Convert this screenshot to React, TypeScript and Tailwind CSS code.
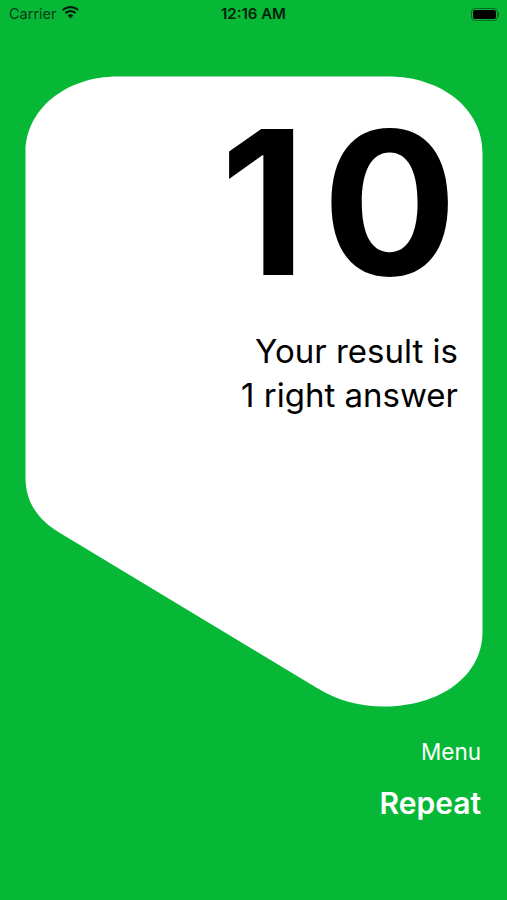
export default function App() {
  return (
    <div className="w-[507px] h-[900px] overflow-hidden bg-[#06b836] font-['Inter','Liberation_Sans',sans-serif]">
      {/* status bar */}
      <div className="relative flex items-center h-[28px] pl-[9px] pr-[8px] text-[#0a3d18]">
        <span className="text-[14.500px] leading-none text-[#063a16]">Carrier</span>
        <svg className="ml-[4px] mb-[3px]" width="19" height="14" viewBox="0 0 19 14" fill="#04200c">
          <path d="M9.5 2.2c2.7 0 5.2 1 7.1 2.8l1.4-1.5C15.7 1.3 12.7 0 9.5 0S3.3 1.3 1 3.5l1.4 1.5C4.3 3.200 6.800 2.200 9.500 2.200z" />
          <path d="M9.500 6.200c1.600 0 3.100.6 4.300 1.700l1.400-1.500C13.700 5 11.700 4.100 9.500 4.100S5.300 5 3.800 6.400l1.400 1.500c1.200-1.100 2.700-1.700 4.300-1.700z" />
          <path d="M9.500 8.300c-1.100 0-2 .4-2.800 1.100l2.800 3.100 2.800-3.100c-.8-.7-1.700-1.100-2.800-1.100z" />
        </svg>
        <span className="absolute left-[221px] top-[6px] text-[15px] leading-none font-semibold text-[#04200c]">12:16 AM</span>
        <div className="ml-auto flex items-center">
          <div className="w-[27px] h-[13px] rounded-[4px] border border-[#0a6a26] p-[1px]">
            <div className="w-full h-full rounded-[2px] bg-black"></div>
          </div>
          <div className="w-[1.500px] h-[5px] rounded-r-sm bg-[#0a6a26]"></div>
        </div>
      </div>

      {/* result card */}
      <div className="relative mt-[48px] ml-[25px] w-[458px] h-[631px]">
        <svg className="absolute inset-0" width="458" height="631" viewBox="25 76 458 631">
          <path
            fill="#fff"
            d="M118 76.500H388C443 76.500 482.500 110 482.500 152V632C482.500 676 440 706.500 384 706.500C358 706.500 337 700 317 688L60 533C38 520 25.500 502 25.500 478V152C25.500 110 65 76.500 118 76.500Z"
          />
        </svg>
        <div className="relative flex flex-col items-end pr-[25px]">
          <div className="mt-[6px] mr-[-15px] text-[200px] leading-[240px] font-bold text-black tracking-[16px]">10</div>
          <div className="mt-[7px] text-right text-[33px] leading-[44px] text-black">
            Your result is
            <br />1 right answer
          </div>
        </div>
      </div>

      {/* actions */}
      <div className="mt-[27px] flex flex-col items-end pr-[26px] text-white">
        <button className="text-[22.500px] leading-[36px]">Menu</button>
        <button className="mt-[15px] text-[30px] leading-[36px] font-semibold">Repeat</button>
      </div>
    </div>
  );
}
